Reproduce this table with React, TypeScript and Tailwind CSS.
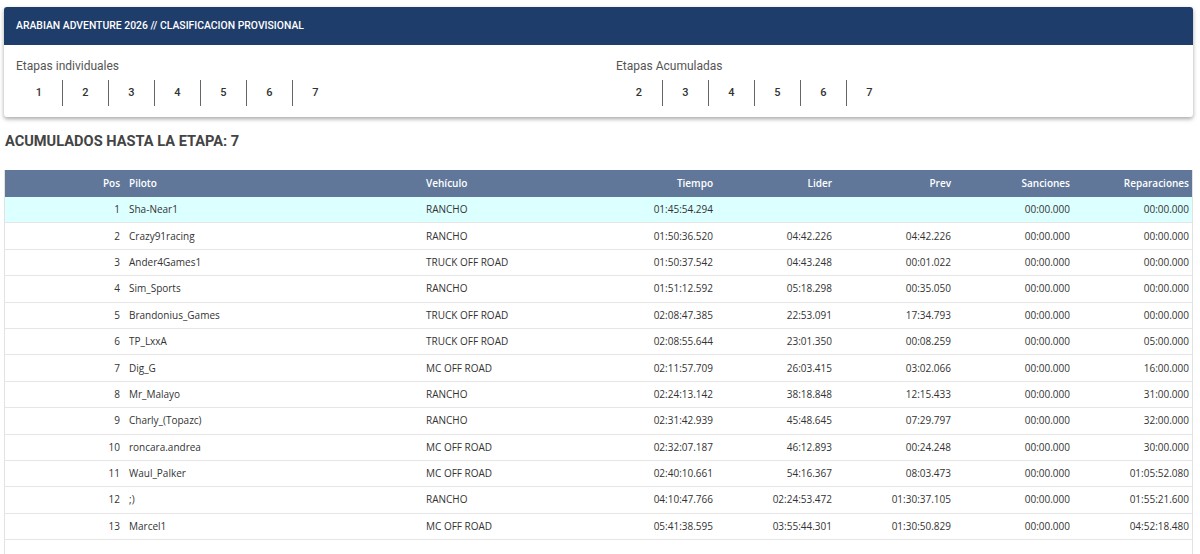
import React from 'react';

const etapas = [1, 2, 3, 4, 5, 6, 7];
const acumuladas = [2, 3, 4, 5, 6, 7];

type Row = {
  pos: number;
  piloto: string;
  vehiculo: string;
  tiempo: string;
  lider: string;
  prev: string;
  sanciones: string;
  reparaciones: string;
};

const rows: Row[] = [
  { pos: 1, piloto: 'Sha-Near1', vehiculo: 'RANCHO', tiempo: '01:45:54.294', lider: '', prev: '', sanciones: '00:00.000', reparaciones: '00:00.000' },
  { pos: 2, piloto: 'Crazy91racing', vehiculo: 'RANCHO', tiempo: '01:50:36.520', lider: '04:42.226', prev: '04:42.226', sanciones: '00:00.000', reparaciones: '00:00.000' },
  { pos: 3, piloto: 'Ander4Games1', vehiculo: 'TRUCK OFF ROAD', tiempo: '01:50:37.542', lider: '04:43.248', prev: '00:01.022', sanciones: '00:00.000', reparaciones: '00:00.000' },
  { pos: 4, piloto: 'Sim_Sports', vehiculo: 'RANCHO', tiempo: '01:51:12.592', lider: '05:18.298', prev: '00:35.050', sanciones: '00:00.000', reparaciones: '00:00.000' },
  { pos: 5, piloto: 'Brandonius_Games', vehiculo: 'TRUCK OFF ROAD', tiempo: '02:08:47.385', lider: '22:53.091', prev: '17:34.793', sanciones: '00:00.000', reparaciones: '00:00.000' },
  { pos: 6, piloto: 'TP_LxxA', vehiculo: 'TRUCK OFF ROAD', tiempo: '02:08:55.644', lider: '23:01.350', prev: '00:08.259', sanciones: '00:00.000', reparaciones: '05:00.000' },
  { pos: 7, piloto: 'Dig_G', vehiculo: 'MC OFF ROAD', tiempo: '02:11:57.709', lider: '26:03.415', prev: '03:02.066', sanciones: '00:00.000', reparaciones: '16:00.000' },
  { pos: 8, piloto: 'Mr_Malayo', vehiculo: 'RANCHO', tiempo: '02:24:13.142', lider: '38:18.848', prev: '12:15.433', sanciones: '00:00.000', reparaciones: '31:00.000' },
  { pos: 9, piloto: 'Charly_(Topazc)', vehiculo: 'RANCHO', tiempo: '02:31:42.939', lider: '45:48.645', prev: '07:29.797', sanciones: '00:00.000', reparaciones: '32:00.000' },
  { pos: 10, piloto: 'roncara.andrea', vehiculo: 'MC OFF ROAD', tiempo: '02:32:07.187', lider: '46:12.893', prev: '00:24.248', sanciones: '00:00.000', reparaciones: '30:00.000' },
  { pos: 11, piloto: 'Waul_Palker', vehiculo: 'MC OFF ROAD', tiempo: '02:40:10.661', lider: '54:16.367', prev: '08:03.473', sanciones: '00:00.000', reparaciones: '01:05:52.080' },
  { pos: 12, piloto: ';)', vehiculo: 'RANCHO', tiempo: '04:10:47.766', lider: '02:24:53.472', prev: '01:30:37.105', sanciones: '00:00.000', reparaciones: '01:55:21.600' },
  { pos: 13, piloto: 'Marcel1', vehiculo: 'MC OFF ROAD', tiempo: '05:41:38.595', lider: '03:55:44.301', prev: '01:30:50.829', sanciones: '00:00.000', reparaciones: '04:52:18.480' },
];

const cols = 'grid grid-cols-[120px_296px_178px_119px_119px_119px_119px_119px]';

function StageGroup({ label, items }: { label: string; items: number[] }) {
  return (
    <div>
      <div className="text-[12px] leading-[16px] text-[#555]">{label}</div>
      <div className="flex mt-[6px]">
        {items.map((n, i) => (
          <div
            key={n}
            className={`w-[46px] h-[26px] flex items-center justify-center text-[11px] font-medium text-[#333] ${i > 0 ? 'border-l-[1.5px] border-[#666]' : ''}`}
          >
            {n}
          </div>
        ))}
      </div>
    </div>
  );
}

export default function App() {
  return (
    <div className="w-[1200px] h-[554px] overflow-hidden bg-white font-['Roboto',sans-serif]">
      <div className="pt-[7px] px-[4px]">
        <div className="w-[1189px] rounded-[3px] bg-white shadow-[0_2px_4px_rgba(0,0,0,0.35)] overflow-hidden">
          <div className="h-[38px] bg-[#1f3d6a] flex items-center px-[12px] text-white text-[10.4px] font-medium">
            ARABIAN ADVENTURE 2026 // CLASIFICACION PROVISIONAL
          </div>
          <div className="flex px-[12px] pt-[13px] h-[72px]">
            <div className="w-[600px]">
              <StageGroup label="Etapas individuales" items={etapas} />
            </div>
            <div>
              <StageGroup label="Etapas Acumuladas" items={acumuladas} />
            </div>
          </div>
        </div>
      </div>

      <h2 className="mt-[15px] pl-[5px] text-[14.6px] leading-[18px] font-bold text-[#444]">
        ACUMULADOS HASTA LA ETAPA: 7
      </h2>

      <div className="mt-[20px] ml-[4px] w-[1189px] h-[400px] border-x border-[#e2e2e2] font-['Open_Sans',sans-serif] text-[10px] text-[#333]">
        <div className={`${cols} h-[27px] bg-[#60779a] text-white font-semibold items-center`}>
          <div className="text-right pr-[5px]">Pos</div>
          <div className="pl-[4px]">Piloto</div>
          <div className="pl-[5px]">Vehículo</div>
          <div className="text-right pr-[5px]">Tiempo</div>
          <div className="text-right pr-[5px]">Lider</div>
          <div className="text-right pr-[5px]">Prev</div>
          <div className="text-right pr-[5px]">Sanciones</div>
          <div className="text-right pr-[5px]">Reparaciones</div>
        </div>
        {rows.map((r) => (
          <div
            key={r.pos}
            className={`${cols} h-[26.4px] items-center border-b border-[#e6e6e6] ${r.pos === 1 ? 'bg-[#dcffff]' : 'bg-white'}`}
          >
            <div className="text-right pr-[5px]">{r.pos}</div>
            <div className="pl-[4px]">{r.piloto}</div>
            <div className="pl-[5px]">{r.vehiculo}</div>
            <div className="text-right pr-[5px]">{r.tiempo}</div>
            <div className="text-right pr-[5px]">{r.lider}</div>
            <div className="text-right pr-[5px]">{r.prev}</div>
            <div className="text-right pr-[5px]">{r.sanciones}</div>
            <div className="text-right pr-[5px]">{r.reparaciones}</div>
          </div>
        ))}
      </div>
    </div>
  );
}
